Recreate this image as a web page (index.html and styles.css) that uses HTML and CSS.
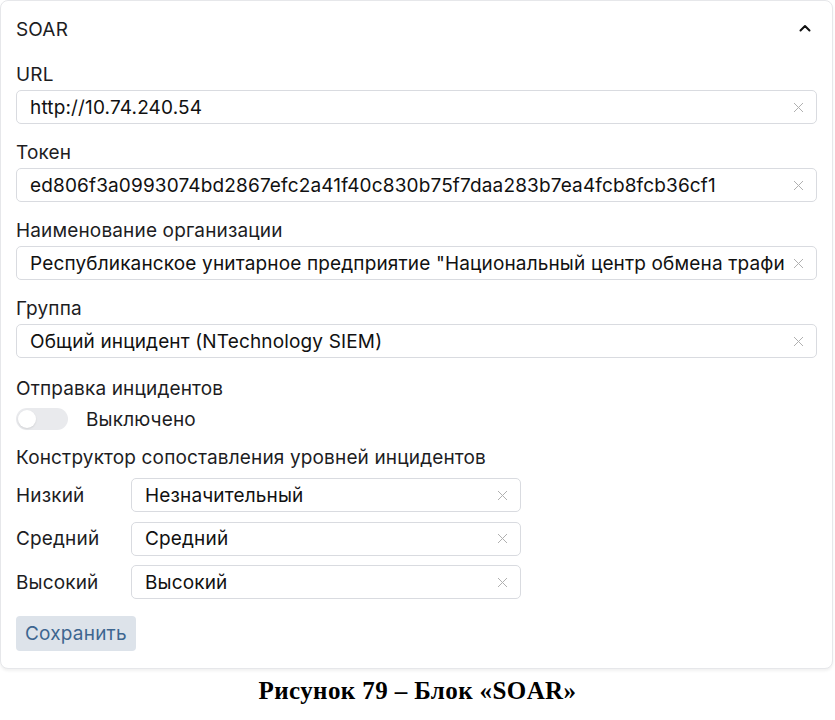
FILE: index.html
```html
<!DOCTYPE html>
<html lang="ru">
<head>
<meta charset="utf-8">
<link rel="stylesheet" href="styles.css">
</head>
<body>
<div class="card">
  <div class="card-header">
    <span class="card-title">SOAR</span>
    <svg class="chevron" width="12" height="8" viewBox="0 0 12 8"><path d="M1.5 6.5 L6 2 L10.5 6.5" fill="none" stroke="#111" stroke-width="2" stroke-linecap="round" stroke-linejoin="round"/></svg>
  </div>
  <div class="fields">
    <div class="field">
      <div class="label">URL</div>
      <div class="input"><span class="value">http://10.74.240.54</span><svg class="clear" width="11" height="11" viewBox="0 0 11 11"><path d="M1 1 L10 10 M10 1 L1 10" stroke="#b0b0b0" stroke-width="1"/></svg></div>
    </div>
    <div class="field">
      <div class="label">Токен</div>
      <div class="input"><span class="value">ed806f3a0993074bd2867efc2a41f40c830b75f7daa283b7ea4fcb8fcb36cf1</span><svg class="clear" width="11" height="11" viewBox="0 0 11 11"><path d="M1 1 L10 10 M10 1 L1 10" stroke="#b0b0b0" stroke-width="1"/></svg></div>
    </div>
    <div class="field">
      <div class="label">Наименование организации</div>
      <div class="input"><span class="value">Республиканское унитарное предприятие "Национальный центр обмена трафи</span><svg class="clear" width="11" height="11" viewBox="0 0 11 11"><path d="M1 1 L10 10 M10 1 L1 10" stroke="#b0b0b0" stroke-width="1"/></svg></div>
    </div>
    <div class="field">
      <div class="label">Группа</div>
      <div class="input"><span class="value">Общий инцидент (NTechnology SIEM)</span><svg class="clear" width="11" height="11" viewBox="0 0 11 11"><path d="M1 1 L10 10 M10 1 L1 10" stroke="#b0b0b0" stroke-width="1"/></svg></div>
    </div>
    <div class="field toggle-field">
      <div class="label">Отправка инцидентов</div>
      <div class="toggle-row">
        <span class="toggle"><span class="knob"></span></span>
        <span class="toggle-text">Выключено</span>
      </div>
    </div>
    <div class="field mapping">
      <div class="label">Конструктор сопоставления уровней инцидентов</div>
      <div class="map-grid">
        <span class="map-label">Низкий</span>
        <div class="input"><span class="value">Незначительный</span><svg class="clear" width="11" height="11" viewBox="0 0 11 11"><path d="M1 1 L10 10 M10 1 L1 10" stroke="#b0b0b0" stroke-width="1"/></svg></div>
        <span class="map-label">Средний</span>
        <div class="input"><span class="value">Средний</span><svg class="clear" width="11" height="11" viewBox="0 0 11 11"><path d="M1 1 L10 10 M10 1 L1 10" stroke="#b0b0b0" stroke-width="1"/></svg></div>
        <span class="map-label">Высокий</span>
        <div class="input"><span class="value">Высокий</span><svg class="clear" width="11" height="11" viewBox="0 0 11 11"><path d="M1 1 L10 10 M10 1 L1 10" stroke="#b0b0b0" stroke-width="1"/></svg></div>
      </div>
    </div>
    <div class="actions">
      <button class="save">Сохранить</button>
    </div>
  </div>
</div>
<p class="caption">Рисунок 79 – Блок «SOAR»</p>
</body>
</html>
```
FILE: styles.css
```css
* { box-sizing: border-box; }
html, body { margin: 0; padding: 0; background: #fff; }
body {
  font-family: Inter, "Noto Sans", Roboto, sans-serif;
  color: #1d1d1f;
  width: 835px;
  letter-spacing: 0.15px;
}
.card {
  width: 833px;
  height: 669px;
  border: 1px solid #e6e7ea;
  border-radius: 8px;
  box-shadow: 0 2px 3px rgba(0,0,0,0.06);
  padding: 0 15px;
  background: #fff;
}
.card-header {
  height: 56px;
  display: flex;
  align-items: center;
  justify-content: space-between;
}
.card-title { font-size: 19px; }
.chevron { margin-right: 6px; margin-top: -2px; }
.fields {
  display: flex;
  flex-direction: column;
  gap: 17px;
  padding-top: 6px;
}
.field { display: flex; flex-direction: column; gap: 3px; }
.label { font-size: 19px; line-height: 24px; }
.input {
  height: 34px;
  border: 1px solid #d9dbe0;
  border-radius: 5px;
  display: flex;
  align-items: center;
  padding: 0 12px 0 13px;
  gap: 8px;
  font-size: 19px;
  color: #111;
}
.value {
  flex: 1;
  white-space: nowrap;
  overflow: hidden;
}
.clear { flex: none; }
.toggle-field { gap: 5px; margin-top: 2px; }
.toggle-row { display: flex; align-items: center; gap: 18px; height: 26px; }
.toggle {
  width: 52px;
  height: 22px;
  border-radius: 11px;
  background: #e9eaed;
  display: flex;
  align-items: center;
  padding: 0 2px;
}
.knob {
  width: 18px;
  height: 18px;
  border-radius: 50%;
  background: #fff;
  box-shadow: 0 1px 2px rgba(0,0,0,0.1);
}
.toggle-text { font-size: 19px; }
.mapping { gap: 8px; margin-top: -3px; }
.map-grid {
  display: grid;
  grid-template-columns: 115px 390px;
  row-gap: 9.5px;
  align-items: center;
}
.map-label { font-size: 19px; }
.save {
  font-family: inherit;
  font-size: 19px;
  letter-spacing: 0.2px;
  color: #3d6690;
  background: #dde3ea;
  border: none;
  border-radius: 4px;
  height: 35px;
  padding: 0 9px;
}
.caption {
  margin: 8px 0 0;
  text-align: center;
  font-family: "Liberation Serif", "Times New Roman", serif;
  font-weight: bold;
  font-size: 25px;
  letter-spacing: 0.4px;
  color: #000;
}
```
